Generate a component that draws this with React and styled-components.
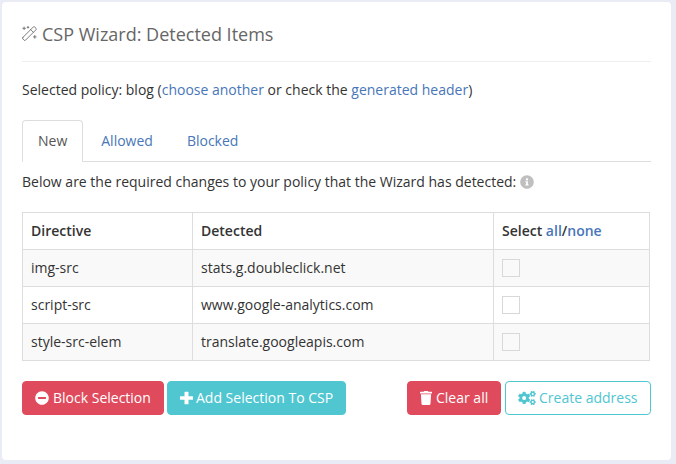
import React from 'react';
import styled, { createGlobalStyle, css } from 'styled-components';
import { FaMinusCircle, FaCogs, FaInfoCircle } from 'react-icons/fa';

const GlobalStyle = createGlobalStyle`
  * { box-sizing: border-box; }
  body {
    margin: 0;
    background: #e9ecf4;
    color: #333;
    font: 14px/20px "Open Sans", sans-serif;
  }
`;

const Page = styled.main`
  height: 464px;
  padding: 2px 5px 4px 2px;
  overflow: hidden;
`;

const Card = styled.section`
  height: 458px;
  padding: 0 20px;
  background: #fff;
  border-radius: 4px;
`;

const Title = styled.h1`
  display: flex;
  align-items: center;
  gap: 5px;
  height: 60px;
  margin: 0 0 18px;
  padding-top: 4px;
  border-bottom: 1px solid #eee;
  color: #666;
  font-size: 18px;
  font-weight: 400;
  white-space: nowrap;

  svg { width: 15px; height: 15px; }
`;

const Text = styled.p`
  display: flex;
  align-items: center;
  margin: 0;
  white-space: pre;
`;

const Link = styled.a`
  color: #4876b8;
  text-decoration: none;
`;

const InfoIcon = styled(FaInfoCircle)`
  width: 14px;
  height: 14px;
  margin-left: 4px;
  color: #bfbfbf;
`;

const Tabs = styled.nav`
  display: flex;
  gap: 2px;
  height: 42px;
  margin: 20px 0 10px;
  border-bottom: 1px solid #ddd;
`;

const Tab = styled.a`
  height: 42px;
  padding: 10px 15px;
  border: 1px solid transparent;
  border-radius: 4px 4px 0 0;
  color: #4876b8;
  ${({ $active }) => $active && css`
    border-color: #ddd #ddd #fff;
    background: #fff;
    color: #555;
  `}
`;

const Table = styled.table`
  width: 628px;
  margin-top: 20px;
  border-collapse: collapse;
  table-layout: fixed;

  tbody tr:nth-child(odd) { background: #f9f9f9; }
`;

const Col = styled.col`
  width: ${({ $width }) => $width}px;
`;

const Cell = styled.td`
  height: 37px;
  padding: 8px;
  border: 1px solid #ddd;
  text-align: left;
  font-weight: 400;
`;

const HeadCell = styled(Cell)`
  font-weight: 600;
`;

const Checkbox = styled.input`
  display: block;
  appearance: none;
  width: 18px;
  height: 18px;
  margin: 0;
  border: 1px solid #d8d8d8;
`;

const Actions = styled.footer`
  display: flex;
  justify-content: space-between;
  width: 629px;
  margin-top: 20px;
`;

const ButtonGroup = styled.div`
  display: flex;
  gap: ${({ $gap }) => $gap}px;
`;

const tones = {
  danger: css`background: #df4b5d; border-color: #df4b5d; color: #fff;`,
  info: css`background: #50c6d1; border-color: #50c6d1; color: #fff;`,
  outline: css`background: #fff; border-color: #50c6d1; color: #50c6d1;`,
};

const Button = styled.button`
  display: flex;
  align-items: center;
  gap: ${({ $gap = 4 }) => $gap}px;
  width: ${({ $width }) => $width}px;
  height: 34px;
  padding: 0 12px;
  border: 1px solid;
  border-radius: 4px;
  font: inherit;
  white-space: nowrap;
  ${({ $tone }) => tones[$tone]}

  svg {
    flex: none;
    width: ${({ $icon }) => $icon}px;
    height: 14px;
  }
`;

const WandIcon = () => (
  <svg viewBox="0 0 15 15" fill="none" stroke="currentColor" strokeWidth="0.85" strokeLinecap="round" strokeLinejoin="round">
    <path d="M.8 11.5 11.300 1q.7-.7 1.400 0l1.300 1.300q.7.7 0 1.400L3.500 14.200q-.7.7-1.400 0L.8 12.900q-.7-.7 0-1.400ZM8.700 3.600l2.700 2.700" />
    <path d="M2.100 1v2.600M.8 2.300h2.600M6 .5v1.600M5.200 1.300h1.600M12.800 9.500v2.800M11.400 10.900h2.800" />
  </svg>
);

const PlusIcon = () => (
  <svg viewBox="0 0 13 14" fill="currentColor">
    <path d="M5 .7h3q.5 0 .5.5v4h4q.5 0 .5.5v2.500q0 .5-.5.5h-4v4q0 .5-.5.5H5q-.5 0-.5-.5v-4h-4Q0 8.700 0 8.200V5.700q0-.5.5-.5h4v-4Q4.500.7 5 .7Z" />
  </svg>
);

const TrashIcon = () => (
  <svg viewBox="0 0 12 14" fill="currentColor">
    <path d="M.5.8H3.500L4 .2Q4.200 0 4.500 0h3q.3 0 .5.2l.5.6h3q.5 0 .5.5v.9q0 .4-.4.4H.4Q0 2.600 0 2.200v-.9Q0 .8.500.8ZM.9 3.300h10.200l-.6 9.400q-.1 1.300-1.400 1.300H2.900Q1.600 14 1.500 12.700Z" />
  </svg>
);

const items = [
  ['img-src', 'stats.g.doubleclick.net'],
  ['script-src', 'www.google-analytics.com'],
  ['style-src-elem', 'translate.googleapis.com'],
];

export default function App() {
  return (
    <Page>
      <GlobalStyle />
      <Card>
        <Title><WandIcon />CSP Wizard: Detected Items</Title>
        <Text>Selected policy: blog (<Link>choose another</Link> or check the <Link>generated header</Link>)</Text>
        <Tabs>
          <Tab $active>New</Tab>
          <Tab>Allowed</Tab>
          <Tab>Blocked</Tab>
        </Tabs>
        <Text>Below are the required changes to your policy that the Wizard has detected:<InfoIcon /></Text>
        <Table>
          <colgroup><Col $width={170} /><Col $width={301} /><Col $width={156} /></colgroup>
          <thead>
            <tr>
              <HeadCell as="th">Directive</HeadCell>
              <HeadCell as="th">Detected</HeadCell>
              <HeadCell as="th">Select <Link>all</Link>/<Link>none</Link></HeadCell>
            </tr>
          </thead>
          <tbody>
            {items.map(([directive, host]) => (
              <tr key={directive}>
                <Cell>{directive}</Cell>
                <Cell>{host}</Cell>
                <Cell><Checkbox type="checkbox" aria-label={directive} /></Cell>
              </tr>
            ))}
          </tbody>
        </Table>
        <Actions>
          <ButtonGroup $gap={3}>
            <Button $tone="danger" $width={142} $icon={14}><FaMinusCircle />Block Selection</Button>
            <Button $tone="info" $width={179} $icon={13} $gap={3}><PlusIcon />Add Selection To CSP</Button>
          </ButtonGroup>
          <ButtonGroup $gap={4}>
            <Button $tone="danger" $width={94} $icon={12}><TrashIcon />Clear all</Button>
            <Button $tone="outline" $width={146} $icon={18} $gap={3}><FaCogs />Create address</Button>
          </ButtonGroup>
        </Actions>
      </Card>
    </Page>
  );
}
